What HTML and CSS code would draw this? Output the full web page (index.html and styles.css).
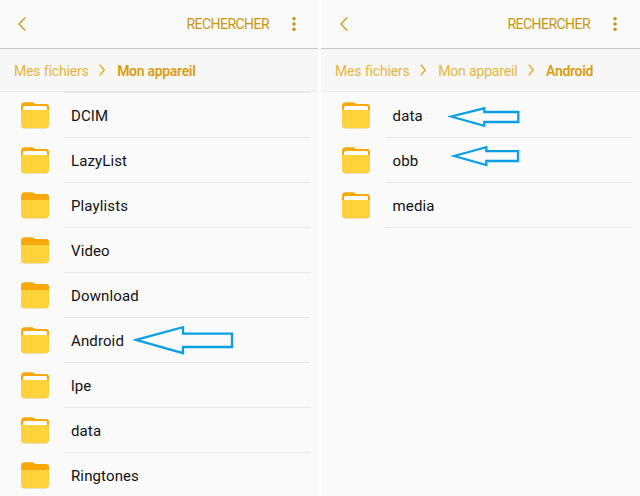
FILE: index.html
```html
<!DOCTYPE html>
<html lang="fr">
<head>
<meta charset="utf-8">
<title>Mes fichiers</title>
<link rel="stylesheet" href="styles.css">
</head>
<body>
<svg class="defs" aria-hidden="true">
  <symbol id="folder" viewBox="0 0 28 27">
    <path d="M0 24V4.200Q0 .3 3.700 .3H10.500Q12 .3 13 1.100L14.500 2H25Q28 2 28 5V22Z" fill="#f9a80a"/>
    <path class="paper" d="M2 11V5.500Q2 4 3.500 4H24.500Q26 4 26 5.500V11Z"/>
    <path d="M0 8H28V22.500Q28 26.500 24 26.500H4Q0 26.500 0 22.500Z" fill="#ddc36c"/>
    <path d="M0 8H28V22Q28 26 24 26H4Q0 26 0 22Z" fill="#fed23b"/>
  </symbol>
  <symbol id="back" viewBox="0 0 8 14"><path d="M7.300 .5L.9 7L7.300 13.500" fill="none" stroke="#c8960c" stroke-width="1.200"/></symbol>
  <symbol id="more" viewBox="0 0 4 14"><g fill="#c8960c"><circle cx="2" cy="1.800" r="1.750"/><circle cx="2" cy="7" r="1.750"/><circle cx="2" cy="12.200" r="1.750"/></g></symbol>
  <symbol id="next" viewBox="0 0 6 12"><path d="M.7 .7L5.200 6L.7 11.300" fill="none" stroke="#e6ae27" stroke-width="1.400"/></symbol>
</svg>
<main class="screens">
  <section class="screen">
    <header class="bar"><svg class="back"><use href="#back"/></svg><span class="search">RECHERCHER</span><svg class="more"><use href="#more"/></svg></header>
    <nav class="crumbs"><span>Mes fichiers</span><svg class="next"><use href="#next"/></svg><b>Mon appareil</b></nav>
    <ul class="files scrolled">
      <li><svg class="folder"><use href="#folder"/></svg><span class="name">DCIM</span></li>
      <li><svg class="folder"><use href="#folder"/></svg><span class="name">LazyList</span></li>
      <li><svg class="folder empty"><use href="#folder"/></svg><span class="name">Playlists</span></li>
      <li><svg class="folder empty"><use href="#folder"/></svg><span class="name">Video</span></li>
      <li><svg class="folder empty"><use href="#folder"/></svg><span class="name">Download</span></li>
      <li><svg class="folder"><use href="#folder"/></svg><span class="name">Android</span>
        <svg class="arrow arrow-android" viewBox="0 0 102 30"><path d="M3 14.800L50 2.200V8.600H99V22H50V28.200Z"/></svg></li>
      <li><svg class="folder"><use href="#folder"/></svg><span class="name">lpe</span></li>
      <li><svg class="folder"><use href="#folder"/></svg><span class="name">data</span></li>
      <li><svg class="folder empty"><use href="#folder"/></svg><span class="name">Ringtones</span></li>
    </ul>
  </section>
  <section class="screen">
    <header class="bar"><svg class="back"><use href="#back"/></svg><span class="search">RECHERCHER</span><svg class="more"><use href="#more"/></svg></header>
    <nav class="crumbs"><span>Mes fichiers</span><svg class="next"><use href="#next"/></svg><span>Mon appareil</span><svg class="next"><use href="#next"/></svg><b>Android</b></nav>
    <ul class="files">
      <li><svg class="folder"><use href="#folder"/></svg><span class="name">data</span>
        <svg class="arrow arrow-data" viewBox="0 0 74 22"><path d="M3 10.500L36.300 2.300V6H70.300V16H36.300V19.800Z"/></svg></li>
      <li><svg class="folder"><use href="#folder"/></svg><span class="name">obb</span>
        <svg class="arrow arrow-obb" viewBox="0 0 72 22"><path d="M4 11L36.300 2.200V6.200H68V16H36.300V20Z"/></svg></li>
      <li><svg class="folder"><use href="#folder"/></svg><span class="name">media</span></li>
    </ul>
  </section>
</main>
</body>
</html>
```
FILE: styles.css
```css
* { box-sizing: border-box; }
body { margin: 0; background: #fff; font-family: Roboto, "Liberation Sans", sans-serif; }
.defs { position: absolute; width: 0; height: 0; }
svg { display: block; flex: none; }
.screens { display: grid; grid-template-columns: 318px 319px; gap: 3px; height: 496px; overflow: hidden; }
.screen { background: #fafafa; overflow: hidden; }
.bar { display: flex; align-items: center; height: 49px; padding: 0 22px 0 18px; border-bottom: 1px solid #c6c6c6; color: #c8960c; }
.screen + .screen .bar { padding: 0 23px 0 19px; }
.back { width: 8px; height: 14px; }
.search { margin-left: auto; font-size: 14px; letter-spacing: -0.55px; }
.more { width: 4px; height: 14px; margin-left: 23px; }
.crumbs { display: flex; align-items: center; height: 43px; padding: 1px 0 0 14px; background: #f7f7f7; border-bottom: 1px solid #e9e9e9; color: #e6b63c; font-size: 14px; letter-spacing: -0.15px; white-space: nowrap; }
.crumbs b { color: #dc9c12; font-weight: 600; letter-spacing: -0.3px; }
.next { width: 6px; height: 12px; margin: 0 12px 1px 10.5px; }
.files { list-style: none; margin: 0; padding: 0 8px 0 64px; }
.files li { position: relative; display: flex; align-items: center; height: 45px; padding-left: 7px; border-bottom: 1px solid #e8e8e8; }
.files li:first-child { height: 46px; border-top: 1px solid #fafafa; }
.files.scrolled li:first-child { border-top-color: #e5e5e5; }
.folder { width: 28px; height: 27px; margin: 1px 0 0 -50px; color: #fff; }
.paper { fill: currentColor; }
.folder.empty { color: #f9a80a; }
.name { margin-left: 22px; padding-top: 2px; color: #111; font-size: 15px; letter-spacing: 0.12px; }
.screen + .screen .name { margin-left: 22.6px; }
.arrow { position: absolute; fill: none; stroke: #0a9fe2; stroke-width: 2.3; }
.arrow-android { left: 69px; top: 7px; width: 102px; height: 30px; }
.arrow-data { left: 63px; top: 13px; width: 74px; height: 22px; }
.arrow-obb { left: 65px; top: 7px; width: 72px; height: 22px; }
```
